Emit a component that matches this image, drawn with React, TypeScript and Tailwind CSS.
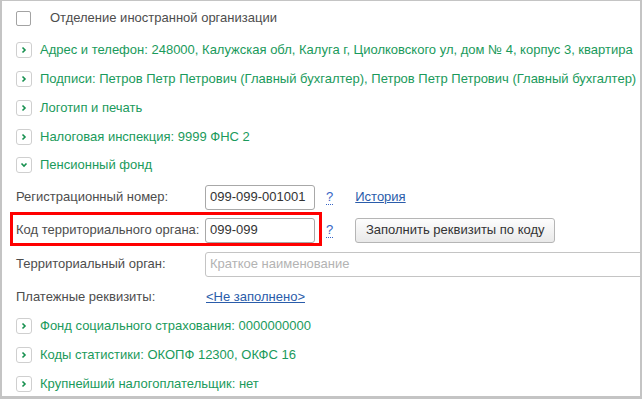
const font = { fontFamily: '"Liberation Sans", Arial, sans-serif' };

const Expander = ({ open }: { open?: boolean }) => (
  <div className="w-4 h-4 shrink-0 rounded-[3px] border border-[#cfcfcf] bg-white flex items-center justify-center">
    {open ? (
      <svg width="8" height="6" viewBox="0 0 8 6">
        <path d="M1.5 1.5 L4 4 L6.5 1.5" fill="none" stroke="#16904f" strokeWidth="1.6" />
      </svg>
    ) : (
      <svg width="6" height="8" viewBox="0 0 6 8">
        <path d="M1.5 1.5 L4 4 L1.5 6.5" fill="none" stroke="#16904f" strokeWidth="1.6" />
      </svg>
    )}
  </div>
);

const Group = ({ text, open, h = "h-[29px]" }: { text: string; open?: boolean; h?: string }) => (
  <div className={`flex items-center ${h}`}>
    <Expander open={open} />
    <span className="ml-2 whitespace-nowrap text-[#1a9a5b]">{text}</span>
  </div>
);

const Hint = () => (
  <span className="text-[#3765c4] border-b border-dotted border-[#3765c4] leading-[14px]">?</span>
);

export default function App() {
  return (
    <div
      style={font}
      className="w-[642px] h-[399px] bg-white border-l-2 border-r-2 border-t border-b-[3px] border-[#c4c4c4] overflow-hidden text-[13px] text-[#4d4d4d] pl-[14px]"
    >
      <div className="flex items-center h-[34px]">
        <div className="w-[15px] h-[15px] rounded-[2px] border border-[#a3a3a3] bg-white shrink-0" />
        <span className="ml-[19px] whitespace-nowrap">Отделение иностранной организации</span>
      </div>
      <Group text="Адрес и телефон: 248000, Калужская обл, Калуга г, Циолковского ул, дом № 4, корпус 3, квартира" />
      <Group text="Подписи: Петров Петр Петрович (Главный бухгалтер), Петров Петр Петрович (Главный бухгалтер)" />
      <Group text="Логотип и печать" />
      <Group text="Налоговая инспекция: 9999 ФНС 2" />
      <Group text="Пенсионный фонд" open h="h-[28px]" />

      <div className="flex items-center h-[36px]">
        <span className="w-[189px] shrink-0 whitespace-nowrap">Регистрационный номер:</span>
        <div className="w-[110px] h-[25px] rounded-[3px] border border-[#a8a8a8] flex items-center px-[4px] text-[#333]">
          099-099-001001
        </div>
        <span className="ml-[11px]"><Hint /></span>
        <a className="ml-[22px] text-[#2a5caa] underline">История</a>
      </div>

      <div className="relative flex items-center h-[30px]">
        <div className="absolute left-[-6px] top-[-3px] w-[312px] h-[34px] border-[3px] border-[#ff0000]" />
        <span className="w-[189px] shrink-0 whitespace-nowrap">Код территориального органа:</span>
        <div className="w-[110px] h-[25px] rounded-[3px] border border-[#a8a8a8] flex items-center px-[4px] text-[#333]">
          099-099
        </div>
        <span className="ml-[11px]"><Hint /></span>
        <button className="ml-[22px] w-[200px] h-[25px] rounded-[3px] border border-[#b5b5b5] bg-gradient-to-b from-[#fdfdfd] to-[#e9e9e9] text-[#333]">
          Заполнить реквизиты по коду
        </button>
      </div>

      <div className="flex items-center h-[38px]">
        <span className="w-[189px] shrink-0 whitespace-nowrap">Территориальный орган:</span>
        <div className="w-[450px] shrink-0 h-[25px] rounded-[3px] border border-[#c4c4c4] flex items-center px-[4px] text-[#b3b3b3]">
          Краткое наименование
        </div>
      </div>

      <div className="flex items-center h-[28px]">
        <span className="w-[190px] shrink-0 whitespace-nowrap">Платежные реквизиты:</span>
        <a className="text-[#2a5caa] underline">&lt;Не заполнено&gt;</a>
      </div>

      <Group text="Фонд социального страхования: 0000000000" />
      <Group text="Коды статистики: ОКОПФ 12300, ОКФС 16" />
      <Group text="Крупнейший налогоплательщик: нет" />
    </div>
  );
}
